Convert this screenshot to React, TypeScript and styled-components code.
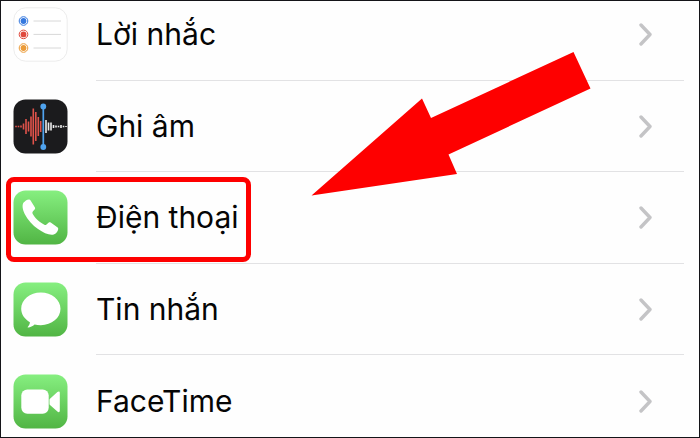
import React from 'react';
import styled, { createGlobalStyle } from 'styled-components';

const GlobalStyle = createGlobalStyle`
  *, *::before, *::after { box-sizing: border-box; }
  html, body, #root { height: 100%; }
  body { margin: 0; background: #fefefe; }
`;

const Screen = styled.main`
  position: relative;
  height: 100%;
  min-height: 320px;
  overflow: hidden;
  border: 1px solid #141418;
  background: #fefefe;
  color: #050505;
  font-family: Inter, 'Noto Sans', sans-serif;
`;

const List = styled.ul`
  display: grid;
  grid-auto-rows: 1fr;
  height: calc(100% + 22px);
  margin: -12px 0 0;
  padding: 0;
  list-style: none;
`;

const Item = styled.li`
  position: relative;
  display: flex;
`;

const RowLink = styled.a`
  display: flex;
  flex: 1;
  gap: 28px;
  padding: 0 15px 0 12px;
  align-items: center;
  color: inherit;
  text-decoration: none;
`;

const AppIcon = styled.svg`
  flex: none;
  width: 55px;
  height: 55px;
`;

const RowBody = styled.span<{ $divided: boolean }>`
  display: flex;
  flex: 1;
  align-self: stretch;
  align-items: center;
  justify-content: space-between;
  padding-right: 31px;
  border-bottom: 1px solid ${(p) => (p.$divided ? '#e2e2e4' : 'transparent')};
`;

const Label = styled.span`
  font-size: 30px;
  line-height: 40px;
`;

const Chevron = styled.svg`
  flex: none;
  width: 15px;
  height: 24px;
`;

const Highlight = styled.span`
  position: absolute;
  top: 5px;
  bottom: 2px;
  left: 5px;
  width: 245px;
  border: 5px solid #fe0000;
  border-radius: 8px;
  pointer-events: none;
`;

const Arrow = styled.svg`
  position: absolute;
  top: 50px;
  left: 310px;
  width: 280px;
  height: 146px;
  pointer-events: none;
`;

const GreenTile = ({ id, children }: { id: string; children: React.ReactNode }) => (
  <AppIcon viewBox="0 0 55 55" aria-hidden="true">
    <defs>
      <linearGradient id={id} x1="0" y1="0" x2="0" y2="1">
        <stop offset="0" stopColor="#86ef80" />
        <stop offset="1" stopColor="#51b544" />
      </linearGradient>
    </defs>
    <rect x="0.5" y="0.5" width="54" height="54" rx="12" fill={`url(#${id})`} />
    {children}
  </AppIcon>
);

const RemindersIcon = () => (
  <AppIcon viewBox="0 0 55 55" aria-hidden="true">
    <rect x="0.8" y="0.8" width="53.4" height="53.4" rx="12" fill="#fff" stroke="#ececec" />
    {[
      ['#3478df', 14],
      ['#e0493d', 27.4],
      ['#eb9b38', 41],
    ].map(([color, y]) => (
      <g key={color}>
        <circle cx="10.5" cy={y} r="4.3" fill="#fff" stroke={color as string} strokeWidth="1" />
        <circle cx="10.5" cy={y} r="2.9" fill={color as string} />
        <path d={`M20.5 ${y}H48`} stroke="#d8d8d8" strokeWidth="1" />
      </g>
    ))}
  </AppIcon>
);

const WAVE: [number, number, string][] = [
  [3, 0.7, '#e0524a'], [5.5, 0.8, '#e0524a'], [8, 1, '#e0524a'], [10.5, 3, '#e0524a'],
  [13, 7.5, '#e0524a'], [15.5, 5, '#e0524a'], [18, 10, '#e0524a'], [20.3, 18, '#e0524a'],
  [22.8, 14.5, '#e0524a'], [25.3, 9.5, '#e0524a'], [27.7, 5.5, '#e0524a'],
  [33, 6.5, '#ececec'], [35.5, 4, '#ececec'], [38, 4, '#ececec'], [40.5, 1.5, '#ececec'],
  [43, 1, '#ececec'], [45.5, 0.8, '#ececec'], [48, 1.6, '#ececec'], [50.5, 0.8, '#ececec'],
  [53, 0.6, '#ececec'],
];

const VoiceMemosIcon = () => (
  <AppIcon viewBox="0 0 55 55" aria-hidden="true">
    <rect x="0.5" y="0.5" width="54" height="54" rx="12" fill="#1b1b1d" />
    {WAVE.map(([x, half, color]) => (
      <path key={x} d={`M${x} ${27.5 - half}V${27.5 + half}`} stroke={color} strokeWidth="1.6" />
    ))}
    <path d="M30.3 7.5V48" stroke="#4fa3ee" strokeWidth="1.7" />
    <circle cx="30.3" cy="7.5" r="2.9" fill="#4fa3ee" />
    <circle cx="30.3" cy="48" r="2.9" fill="#4fa3ee" />
  </AppIcon>
);

const PhoneIcon = () => (
  <GreenTile id="phone-tile">
    <path
      fill="#fff"
      d="M10.4 12.8C11.8 11 13.9 9.6 15.9 9.4C16.7 9.3 17.2 9.7 17.6 10.4L21.8 17.2C22.3 18 22.2 18.7 21.6 19.4L19.8 21.6C19.3 22.2 19.2 22.9 19.6 23.7C21.2 26.7 24 29.7 27 32C28.5 33.1 30 34 31.4 34.7C32.2 35.1 32.9 35 33.5 34.4L35.5 32.8C36.2 32.2 36.9 32.2 37.7 32.6L44 36.9C45 37.5 45.4 38.3 45.2 39.3C44.7 41.7 43 43.9 40.7 44.5C36.8 45.6 30.6 43 25 39C19.6 35.1 14.6 29.6 11.7 23.9C9.6 19.8 8.9 15.2 10.4 12.8Z"
    />
  </GreenTile>
);

const MessagesIcon = () => (
  <GreenTile id="messages-tile">
    <path
      fill="#fff"
      d="M27.8 10.5C38.8 10.5 47.5 17.7 47.5 26.8C47.5 35.9 38.8 43.2 27.8 43.2C25.6 43.2 23.5 42.9 21.6 42.4C19.7 44 17.2 45.3 15.2 45.5C14.6 45.5 14.5 45.1 14.9 44.7C16 43.5 16.8 42 16.9 40.2C11.6 37.3 8.2 32.4 8.2 26.8C8.2 17.7 16.9 10.5 27.8 10.5Z"
    />
  </GreenTile>
);

const FaceTimeIcon = () => (
  <GreenTile id="facetime-tile">
    <rect x="8.3" y="15.5" width="27.4" height="24.3" rx="6" fill="#fff" />
    <path
      fill="#fff"
      d="M37 24.7L44.4 18C45.5 17 46.8 17.3 46.8 18.8V36.8C46.8 38.2 45.5 38.6 44.4 37.6L37 31C36.6 30.6 36.5 30.2 36.5 29.7V26C36.5 25.5 36.6 25.1 37 24.7Z"
    />
  </GreenTile>
);

const APPS = [
  { name: 'Lời nhắc', Icon: RemindersIcon },
  { name: 'Ghi âm', Icon: VoiceMemosIcon },
  { name: 'Điện thoại', Icon: PhoneIcon, highlighted: true },
  { name: 'Tin nhắn', Icon: MessagesIcon },
  { name: 'FaceTime', Icon: FaceTimeIcon },
];

export default function App() {
  return (
    <>
      <GlobalStyle />
      <Screen>
        <List>
          {APPS.map(({ name, Icon, highlighted }, index) => (
            <Item key={name}>
              <RowLink href="#">
                <Icon />
                <RowBody $divided={index < APPS.length - 1}>
                  <Label>{name}</Label>
                  <Chevron viewBox="0 0 15 24" aria-hidden="true">
                    <path
                      d="M3 3L12 12.5L3 22"
                      fill="none"
                      stroke="#c4c4c6"
                      strokeWidth="3.4"
                      strokeLinecap="round"
                      strokeLinejoin="round"
                    />
                  </Chevron>
                </RowBody>
              </RowLink>
              {highlighted && <Highlight />}
            </Item>
          ))}
        </List>
        <Arrow viewBox="0 0 280 146" aria-hidden="true">
          <path d="M0.5 144.5L111 47.5L120 67L262.5 1L279.5 37.5L137.5 103.5L146 123Z" fill="#fe0000" />
        </Arrow>
      </Screen>
    </>
  );
}
